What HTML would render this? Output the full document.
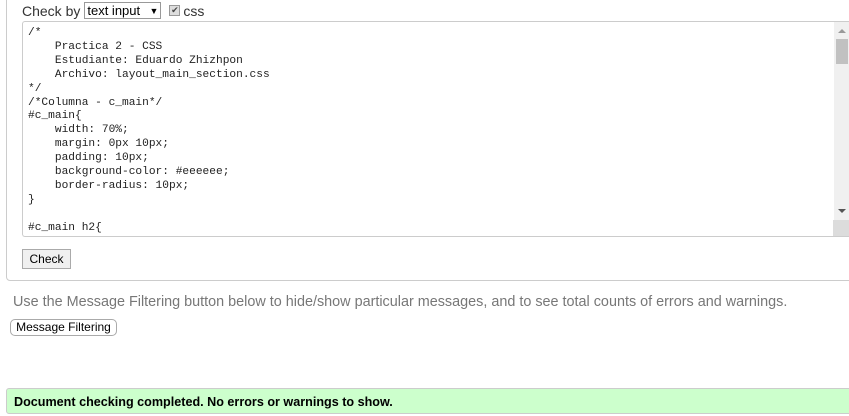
<!DOCTYPE html>
<html><head><style>
*{box-sizing:border-box}
body{margin:0;width:849px;height:416px;overflow:hidden;background:#fff;font-family:"Liberation Sans",Arial,sans-serif;position:relative}
.fs{position:absolute;left:6px;top:-10px;width:860px;height:291px;border:1px solid #ccc;border-radius:4px}
.top{position:absolute;left:22px;top:2px;font-size:14px;color:#333;display:flex;align-items:center}
.sel{margin-left:4px;width:77px;height:17px;border:1px solid #999;font-size:13px;color:#000;padding:0 2px;display:flex;justify-content:space-between;align-items:center;background:#fff}
.cb{margin-left:8px;width:11px;height:11px;border:1px solid #999;background:#ddd;font-size:9px;line-height:9px;text-align:center;color:#444}
.ta{position:absolute;left:22px;top:21px;width:827px;height:216px;border:1px solid #ccc;border-right:none;border-radius:3px 0 0 3px;overflow:hidden}
pre{margin:0;position:absolute;left:5px;top:5px;font-family:"Liberation Mono",monospace;font-size:11.2px;line-height:13.9px;color:#222}
.sb{position:absolute;left:811px;top:0;width:15px;height:214px;background:#f0f0f0}
.thumb{position:absolute;left:2px;top:17px;width:12px;height:25px;background:#c1c1c1}
.btn{position:absolute;font-size:12px;background:#f0f0f0;border:1px solid #aaa;color:#000;text-align:center}
.msg{position:absolute;left:13px;top:294px;font-size:14.4px;color:#777}
.ok{position:absolute;left:6px;top:388px;width:850px;height:26px;background:#ccffcc;border:1px solid #ccc;border-radius:3px;font-size:12.6px;font-weight:bold;padding:6px 0 0 7px;color:#000}
</style></head><body>
<div class="fs"></div>
<div class="top">Check by <div class="sel"><span>text input</span><span style="font-size:9px">▼</span></div><div class="cb">✔</div><span style="margin-left:3px">css</span></div>
<div class="ta"><pre>/*
    Practica 2 - CSS
    Estudiante: Eduardo Zhizhpon
    Archivo: layout_main_section.css
*/
/*Columna - c_main*/
#c_main{
    width: 70%;
    margin: 0px 10px;
    padding: 10px;
    background-color: #eeeeee;
    border-radius: 10px;
}

#c_main h2{</pre>
<div class="sb"><div style="position:absolute;left:4px;top:7px;border:4px solid transparent;border-bottom:4px solid #999;border-top:none"></div><div class="thumb"></div><div style="position:absolute;left:4px;top:187px;border:4px solid transparent;border-top:4px solid #555;border-bottom:none"></div></div>
<div style="position:absolute;left:810px;top:198px;width:16px;height:16px;background:#dcdcdc"></div>
</div>
<div class="btn" style="left:22px;top:249px;width:49px;height:20px;line-height:18px">Check</div>
<div class="msg">Use the Message Filtering button below to hide/show particular messages, and to see total counts of errors and warnings.</div>
<div class="btn" style="left:10px;top:319px;width:107px;height:17px;line-height:15px;border-radius:5px;background:#fff">Message Filtering</div>
<div class="ok">Document checking completed. No errors or warnings to show.</div>
</body></html>
